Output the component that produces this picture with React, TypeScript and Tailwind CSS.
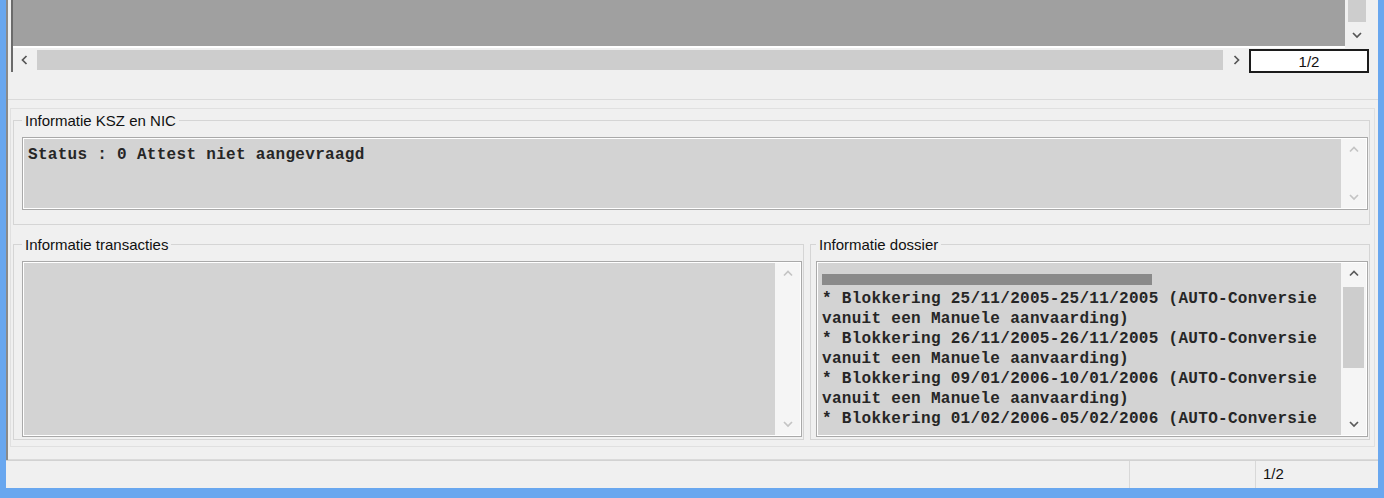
import React from 'react';

type Dir = 'up' | 'down' | 'left' | 'right';

function Chev({ dir, color }: { dir: Dir; color: string }) {
  const pts = {
    up: '1,6.5 5,2.5 9,6.5',
    down: '1,3 5,7 9,3',
    left: '6.5,1 2.5,5 6.5,9',
    right: '3.5,1 7.5,5 3.5,9',
  }[dir];
  return (
    <svg width="10" height="10" viewBox="0 0 10 10">
      <polyline points={pts} fill="none" stroke={color} strokeWidth="1.7" />
    </svg>
  );
}

function TextBox({
  height,
  lines,
  enabled,
  children,
}: {
  height: string;
  lines?: string[];
  enabled?: boolean;
  children?: React.ReactNode;
}) {
  const arrow = enabled ? '#5a5a5a' : '#c4c4c4';
  return (
    <div className={`flex border border-[#a9a9a9] ${height}`}>
      <div className="flex flex-1 border border-white min-w-0">
        <div className="flex-1 bg-[#d3d3d3] overflow-hidden pl-[4px] pt-[6px] font-['Liberation_Mono','Courier_New',monospace] font-bold text-[16px] tracking-[0.3px] leading-[20px] text-[#262626]">
          {children}
          {lines?.map((l, i) => (
            <div key={i} className="whitespace-pre">
              {l}
            </div>
          ))}
        </div>
        <div className="w-[25px] bg-[#f5f5f5] flex flex-col items-center">
          <div className="h-[22px] flex items-center">
            <Chev dir="up" color={arrow} />
          </div>
          {enabled ? (
            <div className="w-[21px] h-[81px] bg-[#cdcdcd] mt-[2px]" />
          ) : null}
          <div className="flex-1" />
          <div className="h-[22px] flex items-center">
            <Chev dir="down" color={arrow} />
          </div>
        </div>
      </div>
    </div>
  );
}

const dossier = [
  '* Blokkering 25/11/2005-25/11/2005 (AUTO-Conversie',
  'vanuit een Manuele aanvaarding)',
  '* Blokkering 26/11/2005-26/11/2005 (AUTO-Conversie',
  'vanuit een Manuele aanvaarding)',
  '* Blokkering 09/01/2006-10/01/2006 (AUTO-Conversie',
  'vanuit een Manuele aanvaarding)',
  '* Blokkering 01/02/2006-05/02/2006 (AUTO-Conversie',
];

export default function App() {
  return (
    <div className="w-[1384px] h-[498px] bg-[#69a7ef] px-[6px] pb-[10px] font-['Liberation_Sans',Arial,sans-serif] text-[15px] text-[#111]">
      <div className="h-full bg-[#f0f0f0] flex flex-col">
        <div className="h-[460px] border-l-2 border-[#8a8a8a] flex flex-col">
          {/* grid */}
          <div className="ml-[3px] mr-[9px] flex flex-col">
            <div className="flex h-[48px]">
              <div className="flex-1 border-l-2 border-[#6b6b6b] flex flex-col">
                <div className="flex-1 bg-[#a0a0a0]" />
                <div className="h-[2px] bg-white" />
              </div>
              <div className="w-[24px] flex flex-col items-center">
                <div className="w-[18px] h-[22px] bg-[#cdcdcd]" />
                <div className="mt-[8px]">
                  <Chev dir="down" color="#555" />
                </div>
              </div>
            </div>
            <div className="flex h-[24px]">
              <div className="flex-1 border-l-2 border-[#6b6b6b] flex items-center">
                <div className="w-[24px] flex justify-center">
                  <Chev dir="left" color="#555" />
                </div>
                <div className="flex-1 h-[20px] bg-[#cdcdcd]" />
                <div className="w-[26px] flex justify-center">
                  <Chev dir="right" color="#555" />
                </div>
              </div>
              <div className="w-[120px] h-[24px] mt-[1px] border-2 border-[#1c1c1c] bg-white flex items-center justify-center leading-none">
                1/2
              </div>
            </div>
          </div>

          <div className="h-[27px]" />

          <div className="flex-1 border-t border-b border-[#dadada] flex flex-col pt-[8px]">
            <div className="h-[339px] ml-[2px] mr-[3px] border border-[#e0e0e0] flex flex-col">
              <fieldset className="mt-[3px] ml-[2px] mr-[4px] border border-[#d5d5d5] pl-[8px] pr-[1px] pb-[14px]">
                <legend className="px-[3px] leading-[17px]">Informatie KSZ en NIC</legend>
                <div className="pt-[8px]">
                  <TextBox height="h-[73px]">
                    <div className="whitespace-pre">Status : 0 Attest niet aangevraagd</div>
                  </TextBox>
                </div>
              </fieldset>

              <div className="mt-[11px] ml-[2px] mr-[4px] flex gap-[6px]">
                <fieldset className="w-[791px] border border-[#d5d5d5] pl-[8px] pr-[1px] pb-[2px]">
                  <legend className="px-[3px] leading-[17px]">Informatie transacties</legend>
                  <div className="pt-[8px]">
                    <TextBox height="h-[176px]" />
                  </div>
                </fieldset>
                <fieldset className="flex-1 min-w-0 border border-[#d5d5d5] pl-[5px] pr-[1px] pb-[2px]">
                  <legend className="px-[3px] leading-[17px]">Informatie dossier</legend>
                  <div className="pt-[8px]">
                    <TextBox height="h-[176px]" lines={dossier} enabled>
                      <div className="h-[20px] flex items-center">
                        <div className="w-[330px] h-[11px] bg-[#8a8a8a]" />
                      </div>
                    </TextBox>
                  </div>
                </fieldset>
              </div>
            </div>
          </div>
        </div>

        {/* status bar */}
        <div className="h-[28px] border-t border-[#d2d2d2] flex">
          <div className="flex-1" />
          <div className="w-[126px] border-l border-[#d8d8d8]" />
          <div className="w-[123px] border-l border-[#d8d8d8] pl-[7px] flex items-center">1/2</div>
        </div>
      </div>
    </div>
  );
}
